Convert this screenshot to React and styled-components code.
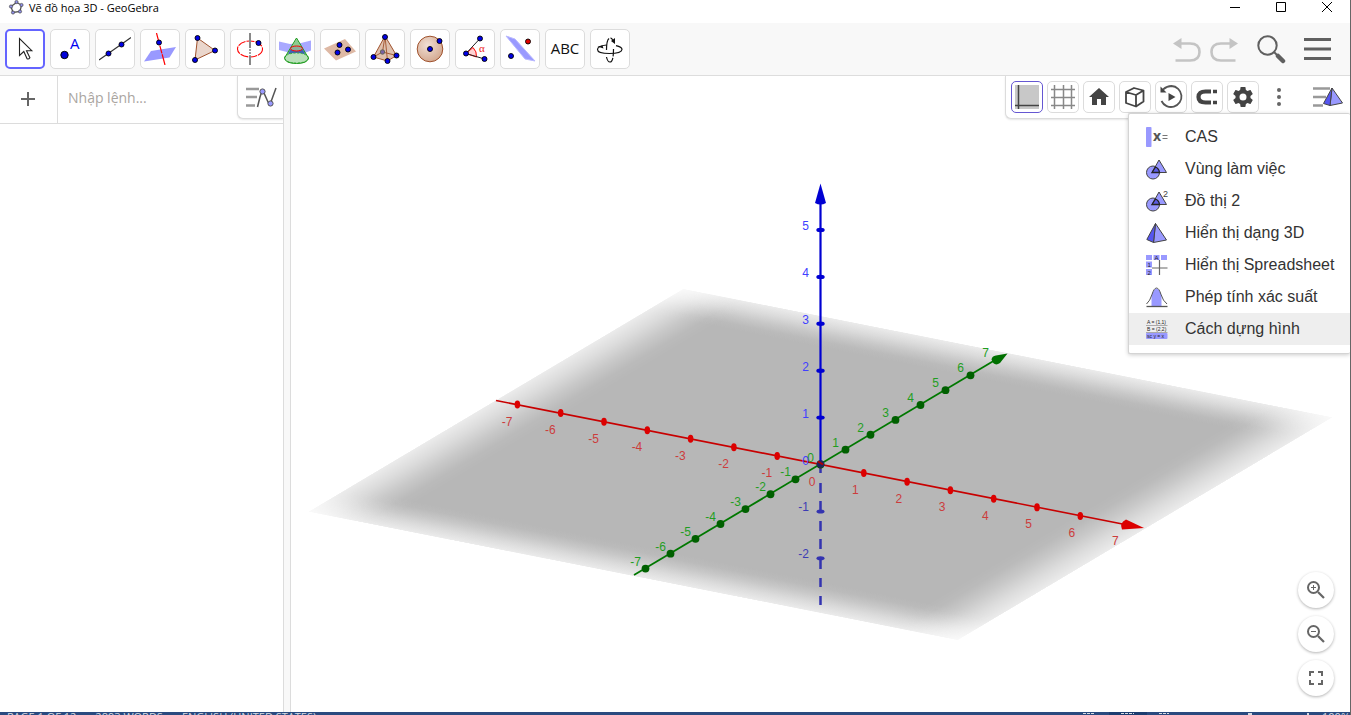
import React, { useState } from 'react'
import styled, { createGlobalStyle } from 'styled-components'

const GlobalStyle = createGlobalStyle`
    * {
        box-sizing: border-box;
    }
    body {
        margin: 0;
        overflow: hidden;
        background-color: white;
        font-family: "Liberation Sans", Arial, sans-serif;
    }
    button {
        padding: 0;
        font-family: inherit;
        cursor: pointer;
    }
    svg {
        display: block;
    }
`

const Window = styled.div`
    display: flex;
    flex-direction: column;
    height: 100vh;
    border-right: 1px solid #666;
`

const TitleBar = styled.header`
    display: flex;
    align-items: flex-start;
    justify-content: space-between;
    height: 23px;
    flex: none;
    overflow: hidden;
`

const AppTitle = styled.h1`
    display: flex;
    align-items: center;
    gap: 5px;
    margin: 0;
    padding-left: 8px;
    height: 16px;
    font: 400 11px/16px "Open Sans", sans-serif;
    color: black;
`

const WindowButtons = styled.div`
    display: flex;
`

const WindowButton = styled.button`
    display: flex;
    justify-content: center;
    align-items: center;
    width: 46px;
    height: 14px;
    border: none;
    background: none;
`

const ToolBar = styled.nav`
    display: flex;
    justify-content: space-between;
    align-items: flex-start;
    height: 53px;
    flex: none;
    padding: 6px 18px 0 5px;
    background-color: #f8f8f8;
    border-bottom: 1px solid #ddd;
`

const Tools = styled.div`
    display: flex;
    gap: 5px;
`

const ToolButton = styled.button`
    width: 40px;
    height: 40px;
    display: flex;
    justify-content: center;
    align-items: center;
    background-color: white;
    border-radius: 5px;
    border: ${props => props.$active ? "2px solid #6464ff" : "1px solid #dcdcdc"};
`

const Actions = styled.div`
    display: flex;
    align-items: center;
    height: 40px;
    gap: 9px;
`

const PlainButton = styled.button`
    display: flex;
    justify-content: center;
    align-items: center;
    width: ${props => props.$width || 28}px;
    height: 32px;
    border: none;
    background: none;
`

const Content = styled.main`
    display: flex;
    flex: 1;
    min-height: 0;
`

const AlgebraPanel = styled.section`
    width: 283px;
    flex: none;
`

const InputRow = styled.div`
    display: flex;
    height: 48px;
    border-bottom: 1px solid #dcdcdc;
`

const AddButton = styled.button`
    width: 58px;
    flex: none;
    display: flex;
    justify-content: center;
    align-items: center;
    padding: 0 2px 2px 0;
    border: none;
    border-right: 1px solid #dcdcdc;
    background: none;
`

const CommandInput = styled.input`
    flex: 1;
    min-width: 0;
    height: 43px;
    border: none;
    outline: none;
    padding: 0 10px;
    font: 400 14px "Open Sans", sans-serif;
    color: #333;
    &::placeholder {
        color: #aaa59f;
        opacity: 1;
    }
`

const StyleToggle = styled.button`
    display: flex;
    justify-content: center;
    align-items: center;
    width: 46px;
    height: 43px;
    border: 1px solid #dcdcdc;
    border-width: 0 0 1px 1px;
    border-radius: 0 0 0 6px;
    background-color: white;
    box-shadow: 0 1px 2px #0000001a;
`

const Splitter = styled.div`
    width: 8px;
    flex: none;
    background-color: #f8f8f8;
    border: 1px solid #dcdcdc;
    border-width: 0 1px;
`

const GraphicsPanel = styled.section`
    position: relative;
    flex: 1;
    min-width: 0;
    overflow: hidden;
`

const Scene = styled.svg`
    width: 100%;
    height: 100%;
    font: 12px "Liberation Sans", Arial, sans-serif;
`

const StyleBar = styled.div`
    position: absolute;
    top: 0;
    right: 0;
    display: flex;
    gap: 4px;
    height: 43px;
    padding: 5px 6px 5px 5px;
    background-color: white;
    border: 1px solid #dcdcdc;
    border-width: 0 0 1px 1px;
    border-radius: 0 0 0 6px;
    box-shadow: 0 1px 2px #0000001a;
`

const StyleButton = styled.button`
    width: 32px;
    height: 32px;
    display: flex;
    justify-content: center;
    align-items: center;
    background-color: white;
    border-radius: 5px;
    border: 1px solid ${props => props.$plain ? "transparent" : props.$active ? "#6557d2" : "#dcdcdc"};
`

const ViewToggle = styled(StyleButton)`
    margin-left: 13px;
`

const ViewMenu = styled.ul`
    position: absolute;
    top: 37px;
    right: 0;
    width: 222px;
    margin: 0;
    padding: 7px 0 8px;
    list-style: none;
    background-color: white;
    border: 1px solid #d4d4d4;
    border-right: none;
    border-radius: 2px;
    box-shadow: 0 1px 4px #00000033;
`

const ViewItem = styled.button`
    display: flex;
    align-items: center;
    gap: 16px;
    width: 100%;
    height: 32px;
    padding-left: 16px;
    border: none;
    background-color: ${props => props.$active ? "#eee" : "white"};
    font-size: 16px;
    line-height: 20px;
    color: #333;
    white-space: nowrap;
`

const ZoomPanel = styled.div`
    position: absolute;
    right: 16px;
    bottom: 16px;
    display: flex;
    flex-direction: column;
    gap: 8px;
`

const ZoomButton = styled.button`
    width: 36px;
    height: 36px;
    display: flex;
    justify-content: center;
    align-items: center;
    border: none;
    border-radius: 50%;
    background-color: white;
    box-shadow: 0 1px 3px #0000004d;
`

const StatusBar = styled.footer`
    display: flex;
    gap: 19px;
    height: 3px;
    flex: none;
    overflow: hidden;
    padding: 0 0 0 7px;
    background-color: #2a4a7f;
    color: #d5dae2;
    font: 400 11px/10px "Open Sans", sans-serif;
    white-space: nowrap;
`

const StatusRight = styled.span`
    display: flex;
    gap: 13px;
    margin-left: auto;
`

const Dot = ({ x, y, r = 2.5, fill = "#0000e6" }) => (
    <circle cx={x} cy={y} r={r} fill={fill} stroke="#000" strokeWidth="0.9" />
)

const ToolSvg = ({ children }) => (
    <svg width="32" height="32" viewBox="0 0 32 32" fill="none" aria-hidden="true">{children}</svg>
)

// toolbar icons, 32x32
const tools = [
    {
        name: "Move",
        icon: <path d="M10.5 5.5v17l4.3-4 3.3 7.3q1.6.8 2.8-1.1l-3.4-7h5.3z" fill="#fff" stroke="#222" strokeWidth="1.1" />
    },
    {
        name: "Point",
        icon: <>
            <circle cx="10.5" cy="22" r="3.7" fill="#0000d8" stroke="#000" />
            <text x="16" y="16" fill="#0000f0" fontSize="15" fontFamily="Open Sans">A</text>
        </>
    },
    {
        name: "Line",
        icon: <>
            <path d="M0 27 32 4.5" stroke="#333" strokeWidth="1.1" />
            <Dot x={9.5} y={20.5} /><Dot x={22.5} y={11.5} />
        </>
    },
    {
        name: "Perpendicular Line",
        icon: <>
            <path d="M0 28.5 7 18l25-4-6.5 10.500z" fill="#9999ff" />
            <path d="M12.5 0 21 32" stroke="#f00" strokeWidth="1.2" strokeDasharray="12 1 8 1" />
            <Dot x={15} y={9.5} />
        </>
    },
    {
        name: "Polygon",
        icon: <>
            <path d="M8.5 5 26 17.5 6 27z" fill="#ead6cc" stroke="#a0522d" />
            <Dot x={8.5} y={5} /><Dot x={26} y={17.5} /><Dot x={6} y={27} />
        </>
    },
    {
        name: "Circle with Axis",
        icon: <>
            <ellipse cx="16" cy="16" rx="12.5" ry="8" stroke="#f00" strokeWidth="1.1" strokeDasharray="8 1" />
            <path d="M16 0v15M16 23v9" stroke="#888" strokeWidth="2" />
            <path d="M16 16v7" stroke="#888" strokeWidth="1.6" strokeDasharray="2 1" />
            <Dot x={24.5} y={10} />
        </>
    },
    {
        name: "Intersect Two Surfaces",
        icon: <>
            <path d="M0 8.5 11 11l11-1 10-2.500v10L20 22 0 17z" fill="#a9a9ff" />
            <path d="M17.5 5 5.5 25q1 5.500 12 5.500t12-5.500z" fill="#92cf92" />
            <path d="M13 14q4.500 3 9 0l4.300 6.500q-9 3-17.300 0z" fill="#3d63b5" />
            <ellipse cx="17.5" cy="25" rx="12" ry="5" stroke="#3fb03f" strokeDasharray="2 1.5" fill="#b9e0b9" />
            <path d="M17.5 5 5.5 25q1 5.500 12 5.500t12-5.500z" stroke="#1c9a1c" />
            <path d="m17.500 6-4.500 8q4.500-2 9 0z" fill="#8ecb91" />
            <ellipse cx="17.5" cy="15.5" rx="6" ry="2.5" fill="#8fae9a" stroke="#f00" />
        </>
    },
    {
        name: "Plane through 3 Points",
        icon: <>
            <path d="M0 15.5 21 6l11 12.5-20 9z" fill="#deb9a5" />
            <Dot x={15.5} y={12} /><Dot x={24} y={16.5} /><Dot x={13.5} y={19.5} />
        </>
    },
    {
        name: "Pyramid",
        icon: <>
            <path d="M16 3 4.5 24 18.5 28 27.5 22.5z" fill="#dfc0ad" stroke="#a0522d" />
            <path d="m16 3 2.500 25M16 3l-2.500 16M4.500 24l9-5 14 3.500" stroke="#a0522d" strokeWidth="0.9" />
            <circle cx="13.5" cy="19" r="2.2" fill="#7961a5" stroke="#665" />
            <Dot x={16} y={4} /><Dot x={4.5} y={24} /><Dot x={18.5} y={28} /><Dot x={27.5} y={22.5} />
        </>
    },
    {
        name: "Sphere",
        icon: <>
            <defs>
                <radialGradient id="ball" cx=".4" cy=".35" r=".7">
                    <stop offset="0" stopColor="#f1dfd5" />
                    <stop offset="1" stopColor="#d2a78e" />
                </radialGradient>
            </defs>
            <circle cx="16" cy="16" r="12.8" fill="url(#ball)" stroke="#a0522d" />
            <Dot x={16} y={16} /><Dot x={25.5} y={8} />
        </>
    },
    {
        name: "Angle",
        icon: <>
            <path d="M7 20.5 14 14.5q4 4 3.500 9.500z" fill="#ffd3d3" stroke="#f00" />
            <path d="M21 5.5 7 20.5 25.5 26" stroke="#222" />
            <text x="20" y="19" fill="#e22" fontSize="11" fontFamily="Liberation Serif">α</text>
            <Dot x={21} y={5.5} /><Dot x={7} y={20.5} /><Dot x={25.5} y={26} />
        </>
    },
    {
        name: "Reflect about Plane",
        icon: <>
            <path d="M2 3 11 6 31 28 21 26z" fill="#9999ff" stroke="#b9b9ff" />
            <Dot x={7} y={23} /><Dot x={24} y={8.5} fill="#e00000" />
        </>
    },
    {
        name: "Text",
        icon: <text x="16" y="21" textAnchor="middle" fill="#111" fontSize="15" fontFamily="Open Sans">ABC</text>
    },
    {
        name: "Rotate 3D Graphics View",
        icon: <>
            <path d="M12.5 12q-9 1-9 4.500 0 4 12 4t12.500-4q0-2.500-6-3.800" stroke="#111" strokeWidth="1.2" />
            <path d="M12.5 24q1 5 3.500 5 3.500 0 3.500-13M12.5 17q0-12 4-12 1.500 0 2.500 3" stroke="#111" strokeWidth="1.2" strokeDasharray="12 1.5" />
            <path d="m3.500 13.500 5-1 1 3zM17 8l4-3v6z" fill="#111" />
        </>
    },
]

const pyramid = <>
    <path d="M9.500 1.500 20.500 18 7.500 20.500z" fill="#9999ff" stroke="#444" />
    <path d="M9.500 1.500 0.800 17.500l6.700 3z" fill="#5555f0" stroke="#444" />
</>

const shapes = <>
    <circle cx="7" cy="14.5" r="6.5" fill="#9999ff" stroke="#444" />
    <path d="M13 2 20.500 14.500H6z" fill="#9999ff" stroke="#444" />
    <path d="M6 14.500 9.500 9q3.500 1.500 4 5.500z" fill="#5c5ce6" stroke="#222" strokeWidth="1.3" />
</>

const views = [
    {
        name: "CAS",
        icon: <>
            <rect x="0" y="1" width="5.5" height="20" rx="0.8" fill="#9999ff" />
            <text x="7" y="15" fontSize="14" fontWeight="700" fill="#555" fontFamily="Open Sans">x</text>
            <path d="M16.500 9.500h5M16.500 12.500h5" stroke="#777" />
        </>
    },
    { name: "Vùng làm việc", icon: shapes },
    {
        name: "Đồ thị 2",
        icon: <>{shapes}<text x="17" y="7" fontSize="9" fill="#444">2</text></>
    },
    { name: "Hiển thị dạng 3D", icon: pyramid },
    {
        name: "Hiển thị Spreadsheet",
        icon: <>
            <path d="M0 1h6v5H0zM7.500 1h6v5h-6zM15 1h6v5h-6zM0 7.500h6v6H0zM0 15h6v6H0z" fill="#9999ff" />
            <path d="M13.500 6v15M6 14h15.500" stroke="#666" strokeWidth="1.2" />
            <text x="8.500" y="6" fontSize="6" fill="#222">A</text>
            <text x="1.500" y="13" fontSize="6" fill="#222">1</text>
            <text x="1.500" y="20.500" fontSize="6" fill="#222">2</text>
        </>
    },
    {
        name: "Phép tính xác suất",
        icon: <>
            <path d="M5.500 20V9Q10.500-4 15.500 9v11z" fill="#9999ff" />
            <path d="M.5 18Q4 15 6 8.500T10.500 2 15 8.500t6 9.500" stroke="#555" />
            <path d="M.5 20.500h21" stroke="#555" strokeWidth="1.3" />
        </>
    },
    {
        name: "Cách dựng hình",
        icon: <>
            <rect x="0" y="15" width="21.5" height="6" rx="1" fill="#9999ff" />
            <path d="M0 7.500h21.500M0 14.500h21.500" stroke="#aaa" />
            <text x="1" y="6" fontSize="5" fill="#222">A = (1,1)</text>
            <text x="1" y="13" fontSize="5" fill="#222">B = (2,2)</text>
            <text x="1" y="20" fontSize="5" fill="#222">sc y = x</text>
        </>
    },
]

// projection of the unit vectors on screen
const ORIGIN = [820.5, 464.5]
const UX = [43.3, 8.57]
const UY = [25, -14.87]
const UZ = 46.9

const project = (unit, n) => [ORIGIN[0] + unit[0] * n, ORIGIN[1] + unit[1] * n]
const range = (from, to) => Array.from({ length: to - from + 1 }, (_, i) => from + i)

const FADE = [[0, 0.27], [0.03, 0.5], [0.06, 0.77], [0.085, 0.95], [0.105, 1]]

const FadeStops = ({ color }) => (
    <>
        {FADE.map(([offset, opacity]) => (
            <stop key={offset} offset={offset} stopColor={color} stopOpacity={opacity} />
        ))}
        {[...FADE].reverse().map(([offset, opacity]) => (
            <stop key={1 - offset} offset={1 - offset} stopColor={color} stopOpacity={opacity} />
        ))}
    </>
)

const Graphics3D = () => (
    <Scene viewBox="291 76 1059 636" preserveAspectRatio="xMidYMid meet" role="img" aria-label="3D">
        <defs>
            <linearGradient id="fadeX"><FadeStops color="#fff" /></linearGradient>
            <linearGradient id="fadeY" x2="0" y2="1"><FadeStops color="#b7b7b7" /></linearGradient>
            <mask id="sides" maskUnits="userSpaceOnUse" x="-7.5" y="-7.5" width="15" height="15">
                <rect x="-7.5" y="-7.5" width="15" height="15" fill="url(#fadeX)" />
            </mask>
        </defs>
        <g transform={`matrix(${UX[0]} ${UX[1]} ${UY[0]} ${UY[1]} ${ORIGIN[0]} ${ORIGIN[1]})`}>
            <rect x="-7.5" y="-7.5" width="15" height="15" fill="url(#fadeY)" mask="url(#sides)" />
        </g>

        <path d="M820.500 466v7M820.500 483v10M820.500 501v12M820.500 521v10M820.500 539v10M820.500 558v11M820.500 578v9M820.500 596v9" stroke="#3333b0" strokeWidth="2.5" />
        {[-1, -2].map(n => (
            <ellipse key={n} cx="820.5" cy={ORIGIN[1] - UZ * n} rx="4" ry="2" fill="#3333b0" />
        ))}

        <path d="M496 400.500 1125 524.500" stroke="#c80000" strokeWidth="1.6" />
        {range(-7, 6).map(n => {
            const [x, y] = project(UX, n)
            return <ellipse key={n} cx={x} cy={y} rx="2.8" ry="4" fill="#dc0000" />
        })}
        <path d="M1144 528 1122 529.500Q1119 523 1126 519.500z" fill="#dc0000" />

        <path d="M634 575 996 359.500" stroke="#007800" strokeWidth="1.8" />
        {range(-7, 6).map(n => {
            const [x, y] = project(UY, n)
            return <circle key={n} cx={x} cy={y} r="3.9" fill="#006000" />
        })}
        <path d="M1007.500 353.500 1000 363Q994 367 991.500 359.500 992 356 996 355.500z" fill="#007000" />

        <path d="M820.500 464V204" stroke="#0000d2" strokeWidth="2.2" />
        {range(1, 5).map(n => (
            <ellipse key={n} cx="820.5" cy={ORIGIN[1] - UZ * n} rx="4.2" ry="2.2" fill="#0000d2" />
        ))}
        <path d="M820.500 183.500 826 203q-5.500 3-11 0z" fill="#0000d2" />
        <circle cx="820.5" cy="464" r="3.8" fill="#222260" />
        <path d="m818 461.500 5 3" stroke="#b00000" strokeWidth="2" />

        <g textAnchor="end" fill="#cc3c3c">
            {range(-7, 7).map(n => {
                const [x, y] = project(UX, n)
                return <text key={n} x={x - 5} y={y + 21}>{n}</text>
            })}
        </g>
        <g textAnchor="middle" fill="#1f9e1f">
            {range(-7, 7).map(n => {
                const [x, y] = project(UY, n)
                return <text key={n} x={x - 10} y={y - 3}>{n}</text>
            })}
        </g>
        <g textAnchor="end">
            {range(-2, 5).map(n => (
                <text key={n} x="809" y={ORIGIN[1] - UZ * n} fill={n < 0 ? "#3c3cb4" : "#4040ff"}>{n}</text>
            ))}
        </g>
    </Scene>
)

const App = () => {
    const [command, setCommand] = useState("")
    const [tool, setTool] = useState("Move")

    return (
        <Window>
            <GlobalStyle />
            <TitleBar>
                <AppTitle>
                    <svg width="16" height="16" viewBox="0 0 16 16" aria-hidden="true">
                        <path d="M3 6.500 8.500 2.500 13.500 5 12 11.500 5 12.500z" fill="none" stroke="#555" strokeWidth="1.3" />
                        {[[3, 6.5], [8.5, 2], [13.5, 5], [12, 11.5], [5, 12.5]].map(([x, y]) => (
                            <circle key={x} cx={x} cy={y} r="1.6" fill="#8f8fe8" stroke="#444" strokeWidth=".7" />
                        ))}
                    </svg>
                    Vẽ đồ họa 3D - GeoGebra
                </AppTitle>
                <WindowButtons>
                    <WindowButton aria-label="Minimize">
                        <svg width="10" height="10"><path d="M0 5.500h10" stroke="#000" /></svg>
                    </WindowButton>
                    <WindowButton aria-label="Maximize">
                        <svg width="10" height="10"><path d="M.5.5h9v9h-9z" fill="none" stroke="#000" /></svg>
                    </WindowButton>
                    <WindowButton aria-label="Close">
                        <svg width="10" height="10"><path d="m0 0 10 10M10 0 0 10" stroke="#000" /></svg>
                    </WindowButton>
                </WindowButtons>
            </TitleBar>

            <ToolBar>
                <Tools>
                    {tools.map(t => (
                        <ToolButton key={t.name} aria-label={t.name} $active={t.name === tool} onClick={() => setTool(t.name)}>
                            <ToolSvg>{t.icon}</ToolSvg>
                        </ToolButton>
                    ))}
                </Tools>
                <Actions>
                    <PlainButton aria-label="Undo">
                        <svg width="28" height="26" viewBox="0 0 28 26" fill="none">
                            <path d="M6 7.500h11q9.500 0 9.500 8.500t-9.500 8.500H2.500" stroke="#c4c4c4" strokeWidth="2.6" />
                            <path d="M0 7.500 8.500 2v11z" fill="#c4c4c4" />
                        </svg>
                    </PlainButton>
                    <PlainButton aria-label="Redo">
                        <svg width="28" height="26" viewBox="0 0 28 26" fill="none">
                            <path d="M22 7.500H11Q1.500 7.500 1.500 16t9.500 8.500h14.500" stroke="#c4c4c4" strokeWidth="2.6" />
                            <path d="M28 7.500 19.500 2v11z" fill="#c4c4c4" />
                        </svg>
                    </PlainButton>
                    <PlainButton aria-label="Search" $width={48}>
                        <svg width="30" height="30" viewBox="0 0 30 30" fill="none">
                            <circle cx="11.5" cy="11.5" r="9.2" stroke="#606060" strokeWidth="2" />
                            <path d="m18 18 4 4" stroke="#606060" strokeWidth="2" />
                            <path d="m22 22 5 5" stroke="#606060" strokeWidth="4.5" strokeLinecap="round" />
                        </svg>
                    </PlainButton>
                    <PlainButton aria-label="Menu">
                        <svg width="28" height="24"><path d="M0 2.500h27M0 12h27M0 21.500h27" stroke="#606060" strokeWidth="3" /></svg>
                    </PlainButton>
                </Actions>
            </ToolBar>

            <Content>
                <AlgebraPanel>
                    <InputRow>
                        <AddButton aria-label="Add">
                            <svg width="14" height="14"><path d="M7 0v14M0 7h14" stroke="#666" strokeWidth="2" /></svg>
                        </AddButton>
                        <CommandInput
                            aria-label="Nhập lệnh..."
                            placeholder="Nhập lệnh..."
                            value={command}
                            onChange={(e) => setCommand(e.target.value)}
                        />
                        <StyleToggle aria-label="Style bar">
                            <svg width="32" height="24" viewBox="0 0 32 24" fill="none">
                                <path d="M1 4h13M1 12h11M1 20.500h9" stroke="#999" strokeWidth="2.5" />
                                <path d="M12.500 22 15 12Q17 5 18.500 7L23 17q2 4 4-3l4-11" stroke="#555" strokeWidth="1.5" />
                                <circle cx="17.5" cy="6.5" r="2.6" fill="#9999ff" stroke="#555" />
                                <circle cx="25.5" cy="18.5" r="2.6" fill="#9999ff" stroke="#555" />
                            </svg>
                        </StyleToggle>
                    </InputRow>
                </AlgebraPanel>
                <Splitter />
                <GraphicsPanel>
                    <Graphics3D />
                    <StyleBar>
                        <StyleButton aria-label="Axes and plane" $active>
                            <svg width="26" height="26"><path d="M1 1h24v24H1z" fill="#c8c8c8" /><path d="M4.500 1v24M1 21.500h24" stroke="#444" strokeWidth="1.5" /></svg>
                        </StyleButton>
                        <StyleButton aria-label="Grid">
                            <svg width="24" height="24"><path d="M3.500 0v24M12.500 0v24M20.500 0v24M0 4.500h24M0 12.500h24M0 20.500h24" stroke="#888" strokeWidth="1.5" /></svg>
                        </StyleButton>
                        <StyleButton aria-label="Home">
                            <svg width="24" height="24" viewBox="0 0 24 24"><path d="M10 20v-6h4v6h5v-8h3L12 3 2 12h3v8z" fill="#444" /></svg>
                        </StyleButton>
                        <StyleButton aria-label="View direction">
                            <svg width="24" height="24" viewBox="0 0 24 24" fill="none" stroke="#444" strokeWidth="1.8" strokeLinejoin="round">
                                <path d="m3 7 8-4 9.500 2.500v11L13 21.500 3 18zM3 7l10 3 7.500-4.500M13 10v11.500" />
                            </svg>
                        </StyleButton>
                        <StyleButton aria-label="Rotate view">
                            <svg width="26" height="26" viewBox="0 0 26 26" fill="none">
                                <path d="M5 5.500Q9 2 13.500 2A10.500 10.500 0 1 1 3.500 17" stroke="#555" strokeWidth="1.8" />
                                <path d="M2.500 2.500v6h6z" fill="#444" />
                                <path d="m10.500 9 7 4-7 4z" fill="#444" />
                            </svg>
                        </StyleButton>
                        <StyleButton aria-label="Snap to grid">
                            <svg width="26" height="24" viewBox="0 0 26 24" fill="none">
                                <path d="M17 6.500h-5.500q-7 0-7 5.500t7 5.500H17" stroke="#444" strokeWidth="4.2" />
                                <path d="M19 6.500h4M19 17.500h4" stroke="#444" strokeWidth="3.5" />
                            </svg>
                        </StyleButton>
                        <StyleButton aria-label="Settings">
                            <svg width="24" height="24" viewBox="0 0 24 24">
                                <path fill="#444" d="M19.430 12.980c.04-.32.07-.64.07-.98s-.03-.66-.07-.98l2.110-1.650c.19-.15.24-.42.12-.64l-2-3.460c-.12-.22-.39-.3-.61-.22l-2.490 1c-.52-.4-1.080-.73-1.690-.98l-.38-2.650C14.460 2.180 14.250 2 14 2h-4c-.25 0-.46.18-.49.42l-.38 2.650c-.61.25-1.170.59-1.690.98l-2.490-1c-.23-.09-.49 0-.61.22l-2 3.460c-.13.22-.07.49.12.64l2.110 1.650c-.04.32-.07.65-.07.98s.03.66.07.98l-2.110 1.650c-.19.15-.24.42-.12.64l2 3.460c.12.22.39.3.61.22l2.490-1c.52.4 1.080.73 1.690.98l.38 2.650c.03.24.24.42.49.42h4c.25 0 .46-.18.49-.42l.38-2.650c.61-.25 1.170-.59 1.690-.98l2.490 1c.23.09.49 0 .61-.22l2-3.460c.12-.22.07-.49-.12-.64zM12 15.500a3.500 3.500 0 1 1 0-7 3.500 3.500 0 0 1 0 7z" />
                            </svg>
                        </StyleButton>
                        <StyleButton aria-label="More" $plain>
                            <svg width="24" height="24" fill="#666"><circle cx="12" cy="5" r="2" /><circle cx="12" cy="12" r="2" /><circle cx="12" cy="19" r="2" /></svg>
                        </StyleButton>
                        <ViewToggle aria-label="Views" $plain>
                            <svg width="30" height="24" viewBox="0 0 30 24" fill="none">
                                <path d="M0 3.500h17M0 12h13M0 20.500h10" stroke="#999" strokeWidth="2.4" />
                                <path d="M19 3 29.500 18 17 20.500z" fill="#9999ff" stroke="#444" />
                                <path d="M19 3 10.500 18.500l6.500 2z" fill="#5555f0" stroke="#444" />
                            </svg>
                        </ViewToggle>
                    </StyleBar>
                    <ViewMenu>
                        {views.map(view => (
                            <li key={view.name}>
                                <ViewItem $active={view.name === "Cách dựng hình"}>
                                    <svg width="24" height="22" viewBox="-1 0 24 22" fill="none" aria-hidden="true">{view.icon}</svg>
                                    {view.name}
                                </ViewItem>
                            </li>
                        ))}
                    </ViewMenu>
                    <ZoomPanel>
                        {["Zoom in", "Zoom out"].map(name => (
                            <ZoomButton key={name} aria-label={name}>
                                <svg width="24" height="24" viewBox="0 0 24 24" fill="none" stroke="#666">
                                    <circle cx="9.5" cy="9.5" r="5.5" strokeWidth="2" />
                                    <path d="m14 14 6 6" strokeWidth="2.2" />
                                    <path d={name === "Zoom in" ? "M7 9.500h5M9.500 7v5" : "M7 9.500h5"} />
                                </svg>
                            </ZoomButton>
                        ))}
                        <ZoomButton aria-label="Fullscreen">
                            <svg width="24" height="24" viewBox="0 0 24 24"><path d="M7 14H5v5h5v-2H7zM5 10h2V7h3V5H5zm12 7h-3v2h5v-5h-2zM14 5v2h3v3h2V5z" fill="#666" /></svg>
                        </ZoomButton>
                    </ZoomPanel>
                </GraphicsPanel>
            </Content>

            <StatusBar>
                <span>PAGE 1 OF 12</span>
                <span>2893 WORDS</span>
                <span>ENGLISH (UNITED STATES)</span>
                <StatusRight>
                    <svg width="226" height="3" fill="none">
                        <path d="M26 0h38v3H26z" fill="#1c3d70" />
                        <path d="M0 1.500h12M38 1.500h13M76 1.500h10" stroke="#d5dae2" strokeDasharray="3 1" />
                        <path d="M165 1h4v2h-4zM224 1h2v2h-2z" fill="#d5dae2" />
                    </svg>
                    <span>100%</span>
                </StatusRight>
            </StatusBar>
        </Window>
    )
}

export default App
